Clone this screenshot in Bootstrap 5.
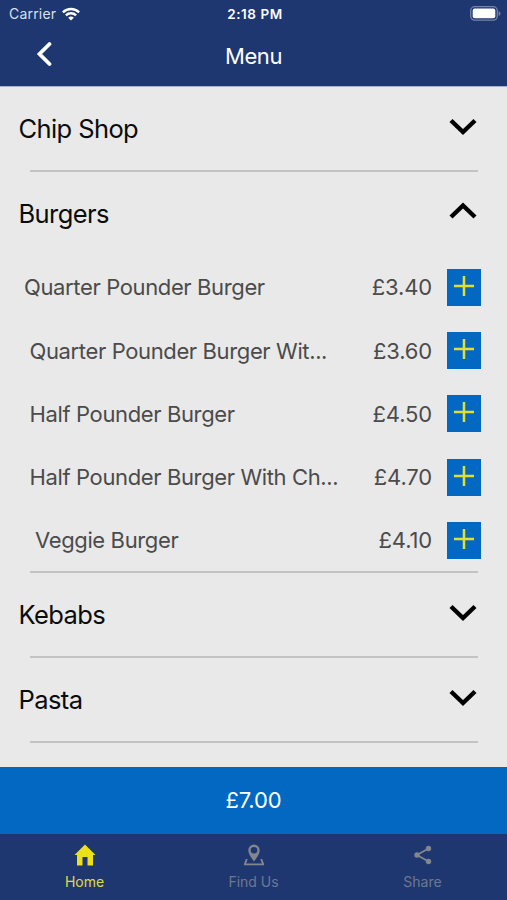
<!DOCTYPE html>
<html lang="en">
<head>
<meta charset="utf-8">
<meta name="viewport" content="width=device-width, initial-scale=1">
<title>Menu</title>
<link rel="stylesheet" href="https://cdn.jsdelivr.net/npm/bootstrap@5.3.0/dist/css/bootstrap.min.css">
<style>
body { font-family: Inter, "Liberation Sans", sans-serif; background: #e9e9e9; color: #0b0b0b; height: 900px; overflow: hidden; line-height: 1.2; }
svg { display: block; flex: none; }
.app-head { height: 87px; margin-bottom: -1px; background: #1e3771; color: #fff; border-bottom: 1px solid #a9b2c5; }
.status-bar { height: 28px; padding: 0 6px 0 9px; font-size: 14px; }
.status-bar .left-side { gap: 6px; }
.status-bar .battery { margin-bottom: 1px; }
.status-bar .carrier { letter-spacing: .2px; color: #d9e0ee; }
.status-bar .clock { font-weight: 600; font-size: 13.5px; letter-spacing: .55px; }
.title-bar { height: 57px; padding: 0 36px; }
.title-bar .back { margin-bottom: 6px; }
.title-bar h1 { font-size: 22px; font-weight: 400; letter-spacing: -.4px; }
.section-head { height: 85px; padding: 0 30px 0 18.5px; font-size: 25.5px; }
.section-head h2 { font-size: inherit; font-weight: 400; letter-spacing: -.6px; padding-top: 2px; }
.section-head svg { margin-bottom: 3px; }
.section-head .open { margin-bottom: 5px; }
.rule { height: 2px; margin: -1px 29px -1px 30px; background: #c3c3c3; }
.dish { height: 63.2px; padding: 0 26px 0 24px; font-size: 22px; color: #4b4b4b; letter-spacing: -.37px; }
.dish.in-1 { padding-left: 29.5px; }
.dish.in-2 { padding-left: 35px; }
.dish .price { margin-right: 15px; letter-spacing: -.15px; }
.add { width: 34px; height: 37px; background: #0268c1; }
.add svg { margin-bottom: 3px; margin-right: 1px; }
.total { height: 67px; background: #0268c1; color: #fff; font-size: 22px; letter-spacing: -.1px; }
.tabs { height: 66px; background: #1e3771; color: #6d7890; font-size: 14px; }
.tabs .tab { padding-top: 9px; gap: 7px; }
.tabs .on { color: #e0dc3c; }
</style>
<script src="https://cdn.jsdelivr.net/npm/bootstrap@5.3.0/dist/js/bootstrap.bundle.min.js"></script>
</head>
<body class="d-flex flex-column">
<svg width="0" height="0" class="d-none">
  <symbol id="down" viewBox="0 0 28 18"><path d="M2 2.500 14 14 26 2.500" fill="none" stroke="#000" stroke-width="4.400"/></symbol>
  <symbol id="up" viewBox="0 0 28 18"><path d="M2 15 14 3.500 26 15" fill="none" stroke="#000" stroke-width="4.400"/></symbol>
  <symbol id="plus" viewBox="0 0 20 20"><path d="M10 0V20M0 10H20" stroke="#e4dd32" stroke-width="2.500"/></symbol>
</svg>

<header class="app-head">
  <div class="status-bar row g-0 align-items-center">
    <div class="col d-flex align-items-center left-side"><span class="carrier">Carrier</span>
      <svg width="18" height="14" viewBox="0 0 18 14" fill="none" stroke="#fff" stroke-width="2.400"><path d="M.9 5.300a11.500 11.500 0 0 1 16.200 0M3.900 8.400a7.200 7.200 0 0 1 10.200 0"/><path d="M9 13.600 6.200 10.800a4 4 0 0 1 5.600 0z" fill="#fff" stroke="none"/></svg>
    </div>
    <div class="col-auto clock">2:18 PM</div>
    <div class="col d-flex justify-content-end">
      <svg class="battery" width="31" height="15" viewBox="0 0 31 15"><rect x=".7" y=".7" width="26.600" height="13.400" rx="4" fill="none" stroke="#7584a8" stroke-width="1.300"/><rect x="2.700" y="2.600" width="22.600" height="9.600" rx="2" fill="#fff"/><path d="M28.700 5v5q1.800-1 1.800-2.500T28.700 5z" fill="#7584a8"/></svg>
    </div>
  </div>
  <nav class="title-bar row g-0 align-items-center">
    <div class="col"><svg class="back" width="16" height="26" viewBox="0 0 16 26"><path d="M13.500 3 3.500 13l10 10" fill="none" stroke="#fff" stroke-width="3.800" stroke-linecap="round"/></svg></div>
    <h1 class="col-auto m-0">Menu</h1>
    <div class="col"></div>
  </nav>
</header>

<main class="flex-grow-1 overflow-hidden">
  <section>
    <div class="section-head d-flex justify-content-between align-items-center"><h2 class="mb-0">Chip Shop</h2><svg width="28" height="18"><use href="#down"/></svg></div>
    <div class="rule"></div>
  </section>
  <section>
    <div class="section-head d-flex justify-content-between align-items-center"><h2 class="mb-0">Burgers</h2><svg class="open" width="28" height="18"><use href="#up"/></svg></div>
    <div class="dish d-flex align-items-center"><span class="me-auto">Quarter Pounder Burger</span><span class="price">£3.40</span><span class="add d-flex align-items-center justify-content-center"><svg width="20" height="20"><use href="#plus"/></svg></span></div>
    <div class="dish in-1 d-flex align-items-center"><span class="me-auto">Quarter Pounder Burger Wit...</span><span class="price">£3.60</span><span class="add d-flex align-items-center justify-content-center"><svg width="20" height="20"><use href="#plus"/></svg></span></div>
    <div class="dish in-1 d-flex align-items-center"><span class="me-auto">Half Pounder Burger</span><span class="price">£4.50</span><span class="add d-flex align-items-center justify-content-center"><svg width="20" height="20"><use href="#plus"/></svg></span></div>
    <div class="dish in-1 d-flex align-items-center"><span class="me-auto">Half Pounder Burger With Ch...</span><span class="price">£4.70</span><span class="add d-flex align-items-center justify-content-center"><svg width="20" height="20"><use href="#plus"/></svg></span></div>
    <div class="dish in-2 d-flex align-items-center"><span class="me-auto">Veggie Burger</span><span class="price">£4.10</span><span class="add d-flex align-items-center justify-content-center"><svg width="20" height="20"><use href="#plus"/></svg></span></div>
    <div class="rule"></div>
  </section>
  <section>
    <div class="section-head d-flex justify-content-between align-items-center"><h2 class="mb-0">Kebabs</h2><svg width="28" height="18"><use href="#down"/></svg></div>
    <div class="rule"></div>
  </section>
  <section>
    <div class="section-head d-flex justify-content-between align-items-center"><h2 class="mb-0">Pasta</h2><svg width="28" height="18"><use href="#down"/></svg></div>
    <div class="rule"></div>
  </section>
</main>

<div class="total d-flex align-items-center justify-content-center">£7.00</div>
<nav class="tabs row g-0 text-center">
  <div class="tab col on d-flex flex-column align-items-center">
    <svg width="24" height="24" viewBox="0 0 24 24"><path d="M12 1.500 1.500 12H4v10.500h5.500V14h5v8.500H20V12h2.500z" fill="#ece01c"/></svg>
    <span>Home</span>
  </div>
  <div class="tab col d-flex flex-column align-items-center">
    <svg width="24" height="24" viewBox="0 0 24 24"><path fill="#83868d" fill-rule="evenodd" d="M12 18.500C9 14.500 6.300 10.800 6.300 7.200a5.700 5.700 0 0 1 11.400 0c0 3.600-2.700 7.300-5.700 11.300zM12 4a3.300 3.300 0 1 0 0 6.600A3.300 3.300 0 0 0 12 4z"/><path d="M4.800 16 2.800 21.400h18.400L19.200 16" fill="none" stroke="#83868d" stroke-width="1.900" stroke-linejoin="round"/></svg>
    <span>Find Us</span>
  </div>
  <div class="tab col d-flex flex-column align-items-center">
    <svg width="24" height="24" viewBox="0 0 24 24" fill="#83868d"><path d="M17.500 5.500 6 12l11.500 6.500" fill="none" stroke="#83868d" stroke-width="1.800"/><circle cx="17.500" cy="5.500" r="2.700"/><circle cx="6" cy="12" r="2.700"/><circle cx="17.500" cy="18.500" r="2.700"/></svg>
    <span>Share</span>
  </div>
</nav>
</body>
</html>
